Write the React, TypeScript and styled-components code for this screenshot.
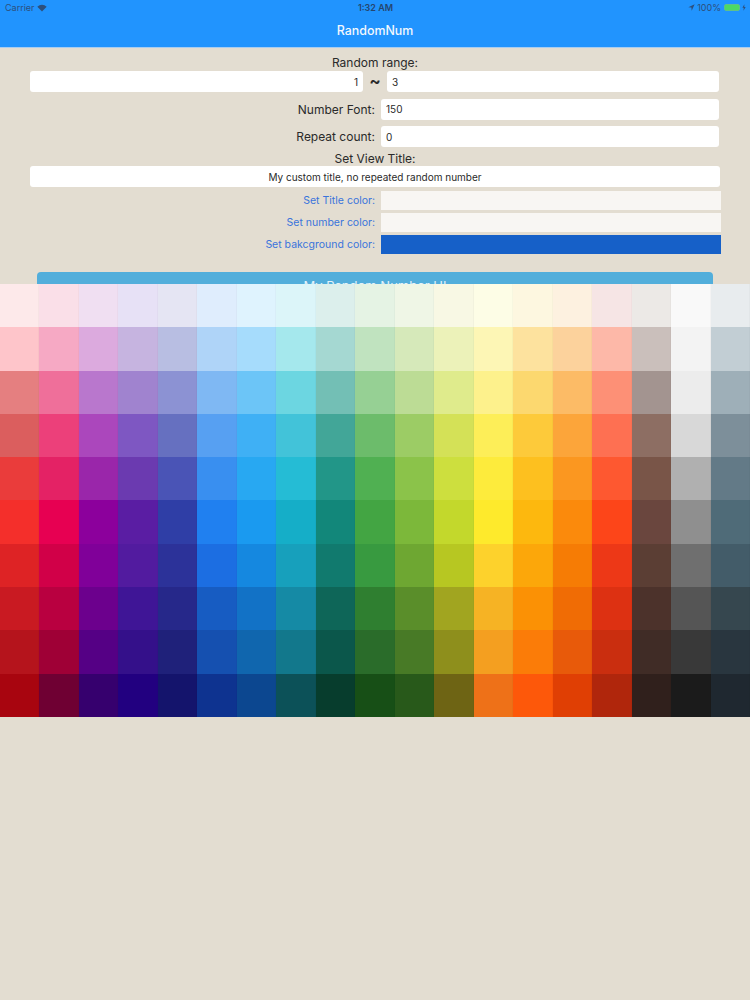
import React from 'react';
import styled, { createGlobalStyle } from 'styled-components';

const PALETTE: string[][] = [
    ['#fde9ea', '#fadfe8', '#f0dff2', '#e7e1f6', '#e5e5f3', '#dfedfd', '#dff3fe', '#dcf5f9', '#dcefec', '#e5f3e4', '#eff6e6', '#f8f8e4', '#fdfde6', '#fdf7e0', '#fdf1e0', '#f6e5e5', '#ece9e6', '#f9f9f9', '#e8ecee'],
    ['#fec5ca', '#f6a9c4', '#dcaade', '#c6b4e0', '#b8bee2', '#afd4f8', '#a6dcfc', '#a5e8ed', '#a5d8d2', '#c0e3bf', '#d6e9ba', '#ecf2b9', '#fdf6b5', '#fde29e', '#fcd29c', '#fdb8a8', '#cabfbb', '#f3f3f3', '#c2ced4'],
    ['#e57f80', '#ef6f9a', '#b977cd', '#a083cf', '#8c92d3', '#7fb8f3', '#6cc5f7', '#6cd6e1', '#73bfb5', '#96d094', '#bcdc95', '#dfeb8c', '#fdf18c', '#fcd86f', '#fcbb66', '#fd9076', '#a39490', '#ececec', '#9eafb8'],
    ['#db5e5e', '#ec407a', '#ab47bc', '#7e57c2', '#6670c0', '#57a0f2', '#3fb0f5', '#42c3d9', '#42a698', '#6cbc6b', '#9ccc65', '#d4e157', '#fdee58', '#fdca3a', '#fca53a', '#fe7052', '#8d6e63', '#d8d8d8', '#7d8f9a'],
    ['#ea3c3b', '#e42265', '#9a26aa', '#6b3ab0', '#4a54b6', '#398ff0', '#28a8f2', '#25bcd5', '#229688', '#50b052', '#8bc34a', '#cddf3e', '#fdeb3c', '#fdc01f', '#fb9720', '#fe5830', '#795548', '#b0b0b0', '#637a87'],
    ['#f42f2b', '#e70052', '#8c009c', '#5a1da3', '#2f3ea6', '#2080f0', '#1a9af0', '#15aec8', '#12877a', '#43a543', '#7cb83a', '#c3d82c', '#feea2c', '#fdb80e', '#fb8a0c', '#fd4519', '#6a463e', '#8f8f8f', '#4f6b78'],
    ['#de2325', '#d10048', '#800099', '#521b9f', '#2c3299', '#1c6ee2', '#1588e0', '#17a0bc', '#117a6e', '#389a40', '#6ea732', '#b7c722', '#fdd22c', '#fca70a', '#f67c05', '#ed3817', '#5b3e34', '#6f6f6f', '#435c69'],
    ['#c91a22', '#b90040', '#6c008d', '#3f1596', '#26288a', '#175cc2', '#1272c6', '#158aa5', '#0e6658', '#2f7f30', '#5a8e2a', '#a1a520', '#f6b324', '#fb9105', '#f06c05', '#dd3112', '#4c322b', '#555555', '#36474f'],
    ['#b5141c', '#9f0036', '#550085', '#34108a', '#1f217a', '#1550b0', '#1066ae', '#12788c', '#0b574b', '#2a6c2a', '#487a26', '#8e8f1c', '#f49f20', '#fb7c08', '#e85a0a', '#ca2e0f', '#402c26', '#393939', '#29363f'],
    ['#a8050f', '#6f0033', '#36006e', '#220080', '#14146c', '#0e3390', '#0c4790', '#0c5158', '#073d2d', '#174f16', '#28591a', '#6e6414', '#ee7118', '#fd580a', '#e03f04', '#b0260c', '#30201c', '#1b1b1b', '#1f2830'],
];

const COLOR_ROWS = [
    { label: 'Set Title color:', color: '#f8f6f3' },
    { label: 'Set number color:', color: '#f8f6f3' },
    { label: 'Set bakcground color:', color: '#1660c8' },
];

const App = () => (
    <Page>
        <GlobalStyle />
        <Header>
            <StatusBar>
                <StatusSide>
                    <span>Carrier</span>
                    <svg width="10" height="8" viewBox="0 0 12 9">
                        <path d="M6 8.6 L0.4 3 A8 8 0 0 1 11.6 3 Z" fill="#2d4f7c" />
                    </svg>
                </StatusSide>
                <StatusTime>1:32 AM</StatusTime>
                <StatusSide $right>
                    <svg width="7" height="7" viewBox="0 0 8 8">
                        <path d="M7.6 0.4 L0.4 3.8 L3.9 4.1 L4.2 7.6 Z" fill="#2d4f7c" />
                    </svg>
                    <span>100%</span>
                    <Battery>
                        <BatteryLevel />
                    </Battery>
                    <svg width="4" height="7" viewBox="0 0 5 8">
                        <path d="M3 0 L0.5 4.4 H2.2 L1.8 8 L4.6 3.4 H2.8 Z" fill="#2d4f7c" />
                    </svg>
                </StatusSide>
            </StatusBar>
            <NavTitle>RandomNum</NavTitle>
        </Header>

        <Form>
            <CenterLabel>Random range:</CenterLabel>
            <RangeRow>
                <Field $align="right" value="1" readOnly />
                <Tilde>~</Tilde>
                <Field value="3" readOnly />
            </RangeRow>
            <LabelledRow>
                <RowLabel>Number Font:</RowLabel>
                <Field value="150" readOnly />
            </LabelledRow>
            <LabelledRow>
                <RowLabel>Repeat count:</RowLabel>
                <Field value="0" readOnly />
            </LabelledRow>
            <CenterLabel $tight>Set View Title:</CenterLabel>
            <Field $align="center" value="My custom title, no repeated random number" readOnly />
            <ColorRows>
                {COLOR_ROWS.map((row) => (
                    <ColorRow key={row.label}>
                        <ColorLabel>{row.label}</ColorLabel>
                        <Swatch $color={row.color} />
                    </ColorRow>
                ))}
            </ColorRows>
            <MainButton>My Random Number UI</MainButton>
        </Form>

        <Palette>
            {PALETTE.flatMap((row, rowIndex) =>
                row.map((color, colIndex) => (
                    <PaletteCell key={`${rowIndex}-${colIndex}`} $color={color} />
                ))
            )}
        </Palette>
    </Page>
);

export default App;

// Styled Components
const GlobalStyle = createGlobalStyle`
    html, body {
        margin: 0;
        padding: 0;
        background: #e3ddd1;
    }

    * {
        box-sizing: border-box;
    }
`;

const Page = styled.div`
    position: relative;
    width: 750px;
    height: 1000px;
    overflow: hidden;
    background: #e3ddd1;
    font-family: Inter, "Liberation Sans", sans-serif;
    color: #2a2a2a;
`;

const Header = styled.header`
    height: 48px;
    background: #2194fe;
    border-bottom: 1px solid #a9cdf0;
`;

const StatusBar = styled.div`
    display: grid;
    grid-template-columns: 1fr auto 1fr;
    align-items: center;
    height: 15px;
    padding: 0 4px 0 5px;
    font-size: 9px;
    color: #2d4f7c;
`;

const StatusSide = styled.div<{ $right?: boolean }>`
    display: flex;
    align-items: center;
    gap: 2px;
    justify-content: ${(props) => (props.$right ? 'flex-end' : 'flex-start')};
`;

const StatusTime = styled.div`
    font-weight: 600;
    color: #25466f;
`;

const Battery = styled.div`
    width: 16px;
    height: 7px;
    border: 1px solid #5fc08a;
    border-radius: 2px;
    margin-left: 1px;
`;

const BatteryLevel = styled.div`
    height: 100%;
    background: #4cd964;
`;

const NavTitle = styled.div`
    height: 32px;
    line-height: 31px;
    text-align: center;
    font-size: 12.4px;
    font-weight: 500;
    color: #f4f8fd;
`;

const Form = styled.main`
    display: flex;
    flex-direction: column;
    padding: 6px 30px 0;
`;

const CenterLabel = styled.div<{ $tight?: boolean }>`
    height: ${(props) => (props.$tight ? '16px' : '17px')};
    line-height: 17px;
    text-align: center;
    font-size: 12px;
    margin-top: ${(props) => (props.$tight ? '3px' : '0')};
`;

const Field = styled.input<{ $align?: string }>`
    display: block;
    width: 100%;
    min-width: 0;
    height: 21px;
    padding: 0 5px;
    border: none;
    border-radius: 3px;
    outline: none;
    background: #fff;
    font-family: inherit;
    font-size: 10px;
    color: #2a2a2a;
    text-align: ${(props) => props.$align || 'left'};
`;

const RangeRow = styled.div`
    display: grid;
    grid-template-columns: 333px 24px 332px;
    align-items: center;
`;

const Tilde = styled.div`
    text-align: center;
    font-size: 17px;
    font-weight: 700;
    line-height: 21px;
`;

const LabelledRow = styled.div`
    display: grid;
    grid-template-columns: 345px 338px;
    column-gap: 6px;
    align-items: center;
    margin-top: 6.5px;
    font-size: 12px;
    text-align: right;
`;

const RowLabel = styled.div`
    line-height: 21px;
`;

const ColorRows = styled.div`
    display: flex;
    flex-direction: column;
    gap: 3px;
    margin-top: 4px;
`;

const ColorRow = styled.div`
    display: grid;
    grid-template-columns: 345px 340px;
    column-gap: 6px;
    align-items: center;
    height: 19px;
    text-align: right;
`;

const ColorLabel = styled.div`
    font-size: 10.5px;
    color: #3a74dc;
`;

const Swatch = styled.div<{ $color: string }>`
    height: 19px;
    background: ${(props) => props.$color};
`;

const MainButton = styled.button`
    display: flex;
    justify-content: center;
    align-items: flex-start;
    align-self: flex-start;
    width: 676px;
    height: 36px;
    margin: 18px 0 0 7px;
    padding: 6px 0 0;
    border: none;
    border-radius: 4px;
    background: #52aedb;
    font-family: inherit;
    font-size: 13px;
    line-height: 16px;
    color: #e4f2fa;
`;

// Sits over the form and hides the lower part of the button
const Palette = styled.div`
    position: absolute;
    top: 284px;
    left: 0;
    width: 750px;
    height: 433px;
    display: grid;
    grid-template-columns: repeat(19, 1fr);
    grid-template-rows: repeat(10, 1fr);
`;

const PaletteCell = styled.div<{ $color: string }>`
    background: ${(props) => props.$color};
    box-shadow: inset -1px 0 0 rgba(0, 0, 0, 0.025);
`;
